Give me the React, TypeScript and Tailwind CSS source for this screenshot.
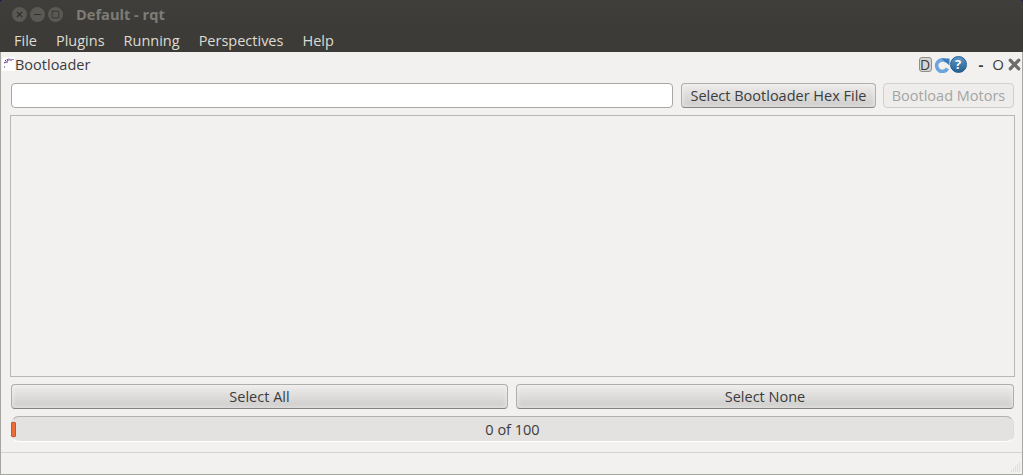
import { X, Minus, Square } from 'lucide-react';

const font = { fontFamily: '"Open Sans", sans-serif' };

function WindowButton({ children }: { children: React.ReactNode }) {
  return (
    <div className="w-[15px] h-[15px] rounded-full bg-[#5a5954] flex items-center justify-center text-[#2f2e2b]">
      {children}
    </div>
  );
}

function PushButton({ label, className }: { label: string; className: string }) {
  return (
    <button
      className={`h-[25px] pt-[1px] rounded-[4px] border border-[#b0aeaa] border-b-[#85837f] bg-gradient-to-b from-[#eeedec] to-[#cdcccb] shadow-[inset_0_0_4px_#f2f1f0] text-[14.5px] leading-none text-[#3c3c3c] ${className}`}
    >
      {label}
    </button>
  );
}

function ToolIcons() {
  return (
    <div className="flex items-center">
      <div className="w-[13px] h-[15px] rounded-[3px] border border-[#8f8e8a] bg-[#d6d5d2] flex items-center justify-center text-[14px] leading-none text-[#3c3c3c]">
        D
      </div>
      <svg width="16" height="16" viewBox="0 0 16 16" className="ml-[2px]">
        <path d="M12.5 4.5A5.8 5.8 0 1 0 13.5 11.5" fill="none" stroke="#6aa6dc" strokeWidth="3.6" />
        <path d="M7.5 1.5h8v7z" fill="#3a7cb8" />
      </svg>
      <div className="w-[17px] h-[17px] rounded-full bg-gradient-to-b from-[#5d97c9] to-[#24618f] border border-[#1f5a8e] flex items-center justify-center text-[13px] font-bold leading-none text-white">
        ?
      </div>
    </div>
  );
}

export default function App() {
  return (
    <div className="w-[1023px] h-[475px] flex flex-col bg-[#16164a] overflow-hidden" style={font}>
      <div className="h-[28px] rounded-t-[3px] bg-gradient-to-b from-[#3f3e3a] to-[#3c3b37] flex items-center pl-[12px] pt-[1px] shrink-0">
        <div className="flex gap-[3px]">
          <WindowButton><X size={9} strokeWidth={3} /></WindowButton>
          <WindowButton><Minus size={11} strokeWidth={2} /></WindowButton>
          <WindowButton><Square size={9} strokeWidth={2} /></WindowButton>
        </div>
        <span className="ml-[13px] text-[14.6px] font-bold text-[#7d7c77]">Default - rqt</span>
      </div>

      <div className="h-[24px] pt-[1px] bg-[#3c3b37] flex items-center pl-[14px] gap-[19px] text-[14.5px] text-[#dfdbd2] shrink-0">
        <span>File</span>
        <span>Plugins</span>
        <span>Running</span>
        <span>Perspectives</span>
        <span>Help</span>
      </div>

      <div className="flex-1 flex flex-col bg-[#f2f1f0] border-l border-r border-b border-[#a8a6a2] min-h-0">
        <div className="h-[25px] flex items-center shrink-0">
          <svg width="13" height="14" viewBox="0 0 13 14" className="ml-[1px] mb-[1px] bg-white">
            <path d="M3 3l1 1M5 2l1 2M7 1.5v2M9 2v2M11 2v1M2 6l2-1M4 5l2 0M2 10h1" stroke="#5b1a8c" strokeWidth="1" fill="none" />
          </svg>
          <span className="text-[14.5px] text-[#3c3c3c]">Bootloader</span>
          <div className="ml-auto -mr-[1px] flex items-center">
            <ToolIcons />
            <span className="ml-[12px] text-[15px] font-bold text-[#3c3c3c]">-</span>
            <span className="ml-[9px] text-[15px] text-[#3c3c3c]">O</span>
            <X size={17} strokeWidth={4.5} className="ml-[2px] text-[#6e6d69]" />
          </div>
        </div>

        <div className="flex flex-col pl-[10px] pr-[7px] pt-[6px] gap-[7px] flex-1 min-h-0">
          <div className="flex items-center">
            <input className="w-[662px] h-[25px] rounded-[4px] border border-[#a9a7a3] bg-white" />
            <PushButton label="Select Bootloader Hex File" className="ml-[8px] w-[195px]" />
            <button className="ml-[7px] w-[131px] h-[25px] pt-[1px] rounded-[4px] border border-[#d0cfcc] bg-[#eeedec] text-[14.5px] leading-none text-[#a5a4a2]">
              Bootload Motors
            </button>
          </div>

          <div className="h-[262px] -ml-[1px] border border-[#b9b7b3] bg-[#f2f1f0] shrink-0" />

          <div className="flex gap-[8px]">
            <PushButton label="Select All" className="w-[497px]" />
            <PushButton label="Select None" className="w-[498px]" />
          </div>

          <div className="relative h-[26px] w-[1003px] pt-[1px] rounded-[8px] border border-[#dcdbd9] border-t-[#b3b1ae] border-b-white bg-[#e3e2e0] flex items-center justify-center text-[14.5px] text-[#3c3c3c]">
            <div className="absolute -left-[1px] top-[5px] w-[5px] h-[15px] rounded-[1px] bg-[#ee6c3a] border border-[#c9562a]" />
            0 of 100
          </div>
        </div>

        <div className="h-[22px] border-t border-[#d5d3d0] relative shrink-0">
          <svg width="11" height="11" viewBox="0 0 11 11" className="absolute right-[1px] bottom-[1px]">
            <path d="M9 1h1M7 3h1M9 3h1M5 5h1M7 5h1M9 5h1M3 7h1M5 7h1M7 7h1M9 7h1M1 9h1M3 9h1M5 9h1M7 9h1M9 9h1" stroke="#cfcdca" strokeWidth="1" />
          </svg>
        </div>
      </div>
    </div>
  );
}
